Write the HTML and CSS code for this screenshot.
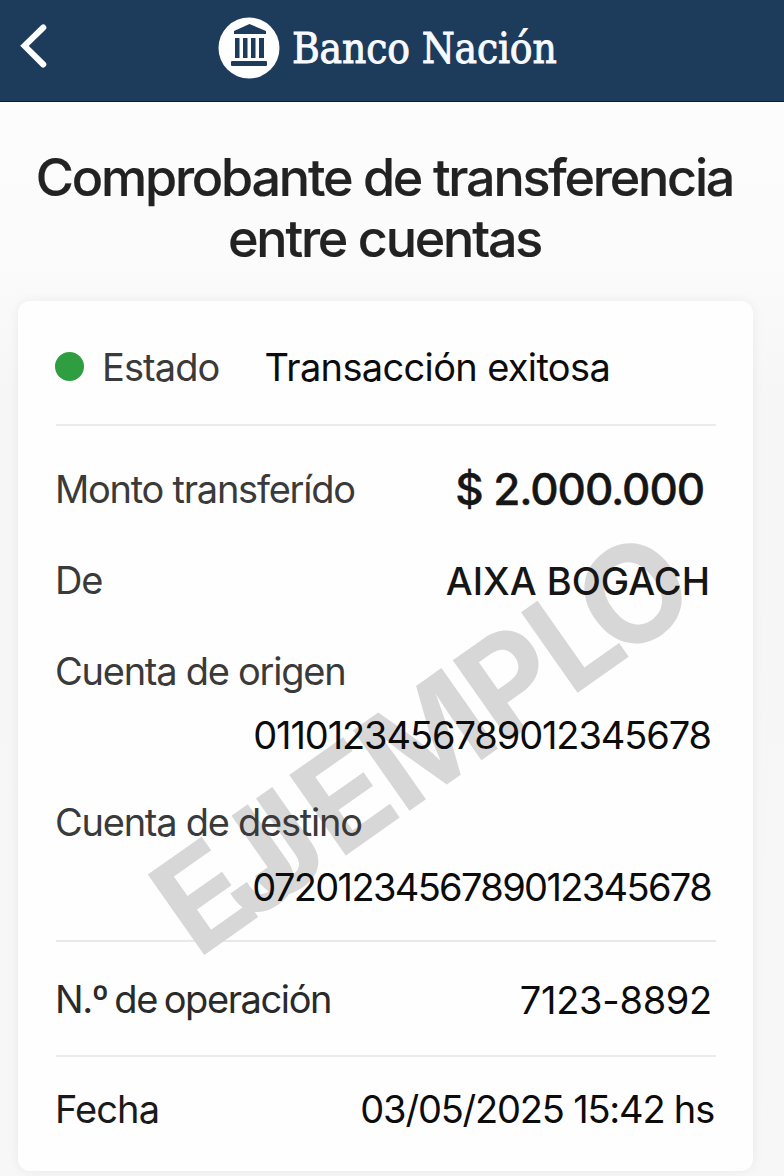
FILE: index.html
```
<!DOCTYPE html>
<html lang="es">
<head>
    <meta charset="UTF-8">
    <meta name="viewport" content="width=device-width, initial-scale=1.0">
    <title>Comprobante de transferencia</title>
    <link rel="stylesheet" href="styles.css">
</head>
<body>
    <header class="topbar">
        <svg class="back" viewBox="0 0 32 48" width="32" height="48">
            <path d="M26.300 5.500L7.500 23.800L26.300 42.500" fill="none" stroke="#fff" stroke-width="6" stroke-linecap="round" stroke-linejoin="miter"/>
        </svg>
        <div class="brand">
            <svg class="logo" viewBox="0 0 62 62" width="62" height="62">
                <circle cx="31" cy="31" r="30.500" fill="#fff"/>
                <g fill="#1d3b5a">
                    <path d="M31.500 7L48 14V17H16V14Z"/>
                    <rect x="17" y="21" width="4.500" height="20"/>
                    <rect x="25" y="21" width="4.500" height="20"/>
                    <rect x="33" y="21" width="4.500" height="20"/>
                    <rect x="41" y="21" width="5" height="20"/>
                    <rect x="13" y="44" width="36" height="5" rx="1"/>
                </g>
            </svg>
            <span class="brand-name">Banco Nación</span>
        </div>
    </header>
    <h1 class="title">Comprobante de transferencia<br>entre cuentas</h1>
    <main class="card">
        <div class="watermark">E<span class="wm-j">J</span>EMPL<span class="wm-o">O</span></div>
        <div class="row status">
            <span class="dot"></span>
            <span class="label status-label">Estado</span>
            <span class="value status-value">Transacción exitosa</span>
        </div>
        <section class="details">
            <div class="row">
                <span class="label">Monto transferído</span>
                <span class="amount">$ 2.000.000</span>
            </div>
            <div class="row">
                <span class="label">De</span>
                <span class="name">AIXA BOGACH</span>
            </div>
            <div class="account">
                <div class="label">Cuenta de origen</div>
                <div class="value number">0110123456789012345678</div>
            </div>
            <div class="account">
                <div class="label">Cuenta de destino</div>
                <div class="value number tight">0720123456789012345678</div>
            </div>
        </section>
        <div class="row operation">
            <span class="label op-label">N.º de operación</span>
            <span class="value op-number">7123-8892</span>
        </div>
        <div class="row date">
            <span class="label date-label">Fecha</span>
            <span class="value date-value">03/05/2025 15:42 hs</span>
        </div>
    </main>
</body>
</html>
```
FILE: styles.css
```
body {
    margin: 0;
    min-height: 1176px;
    font-family: Inter, "Liberation Sans", sans-serif;
    background: linear-gradient(#fdfcfc 100px, #fbfbfb 250px, #f6f6f6 400px, #f7f7f7);
    color: #111;
}
.topbar {
    display: flex;
    box-sizing: border-box;
    height: 102px;
    padding: 17px 0 0 17px;
    background: #1d3b5a;
    border-bottom: 1px solid #0b1a2b;
}
.back {
    margin-top: 5px;
}
.brand {
    display: flex;
    height: 62px;
    margin-left: 169px;
    align-items: center;
}
.brand-name {
    margin-left: 12px;
    padding-top: 2px;
    font-family: "DejaVu Serif Condensed", "DejaVu Serif", serif;
    font-stretch: condensed;
    font-size: 42px;
    line-height: 62px;
    letter-spacing: -0.15px;
    color: #f7faff;
    white-space: nowrap;
    -webkit-text-stroke: 0.9px #f7faff;
}
.title {
    margin: 45px 15px 0 0;
    font-size: 52px;
    font-weight: 500;
    line-height: 61px;
    letter-spacing: -2.2px;
    text-align: center;
    white-space: nowrap;
    color: #222;
    -webkit-text-stroke: 0.2px #222;
}
.card {
    position: relative;
    box-sizing: border-box;
    width: 735px;
    height: 870px;
    margin: 32px 0 0 18px;
    padding: 0 37px 0 38px;
    background: #fefefe;
    border-radius: 12px;
    box-shadow: 0 0 12px rgba(0, 0, 0, 0.06);
}
.watermark {
    position: absolute;
    left: 179px;
    top: 545px;
    font-size: 135px;
    font-weight: 700;
    line-height: 130px;
    letter-spacing: -4px;
    white-space: nowrap;
    color: #d7d7d7;
    transform: rotate(-35.1deg);
    transform-origin: 0 114px;
}
/* second stroke of the J, printed next to the first */
.wm-j {
    margin: 0 37px 0 -17px;
    text-shadow: 30px 0 0 #d7d7d7;
}
.wm-o {
    margin-left: -13px;
}
.row {
    position: relative;
    display: flex;
    height: 91px;
    align-items: center;
    justify-content: space-between;
    white-space: nowrap;
}
.label {
    margin-left: -1px;
    font-size: 38px;
    letter-spacing: -1.25px;
    color: #3a3a3a;
}
.value {
    font-size: 38px;
    color: #0c0c0c;
}
.status {
    height: 115px;
    padding-top: 8px;
    justify-content: flex-start;
    border-bottom: 2px solid #ebebeb;
}
.dot {
    width: 29px;
    height: 29px;
    margin-left: -1px;
    border-radius: 50%;
    background: #2f9e41;
}
.status-label {
    margin-left: 18px;
    letter-spacing: -0.9px;
}
.status-value {
    margin-left: 45px;
    letter-spacing: -0.65px;
}
.details {
    padding: 17px 0 13px;
    border-bottom: 2px solid #e8e8e8;
}
.amount {
    margin-right: 12px;
    padding-top: 1px;
    font-size: 44px;
    font-weight: 500;
    letter-spacing: -1.1px;
    color: #161616;
    -webkit-text-stroke: 0.4px #161616;
}
.name {
    margin-right: 6px;
    padding-top: 2px;
    font-size: 38px;
    font-weight: 500;
    color: #161616;
}
.account {
    position: relative;
    height: 151px;
}
.account .label {
    line-height: 92px;
}
.number {
    margin-right: 5px;
    line-height: 36px;
    letter-spacing: -1.1px;
    text-align: right;
}
.tight {
    line-height: 38px;
    letter-spacing: -1.65px;
}
.operation {
    height: 113px;
    border-bottom: 2px solid #ebebeb;
}
.op-label {
    letter-spacing: -1.4px;
    word-spacing: -2.5px;
    color: #2a2a2a;
}
.op-number {
    margin-right: 4px;
    padding-top: 2px;
    letter-spacing: -0.3px;
}
.date {
    height: 103px;
}
.date-label {
    letter-spacing: -0.9px;
    color: #1a1a1a;
}
.date-value {
    margin-right: 2px;
    letter-spacing: -1.2px;
}
```
